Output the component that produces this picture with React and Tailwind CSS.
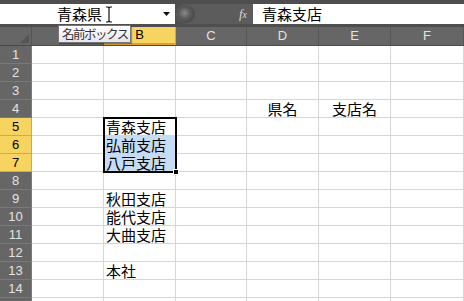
const cols = [
  { id: "A", w: 72 },
  { id: "B", w: 72 },
  { id: "C", w: 71 },
  { id: "D", w: 72 },
  { id: "E", w: 72 },
  { id: "F", w: 73 },
];

const data = {
  "4D": "県名",
  "4E": "支店名",
  "5B": "青森支店",
  "6B": "弘前支店",
  "7B": "八戸支店",
  "9B": "秋田支店",
  "10B": "能代支店",
  "11B": "大曲支店",
  "13B": "本社",
};

const selectedRows = [5, 6, 7];
const rows = Array.from({ length: 15 }, (_, i) => i + 1);

const jp = "font-['MS_UI_Gothic','Noto_Sans_CJK_JP',sans-serif]";

const App = () => {
  return (
    <div className={`relative w-[464px] h-[301px] overflow-hidden bg-white ${jp}`}>
      {/* formula bar */}
      <div className="flex h-[27px] bg-[#4e4e4e] pt-[4px] pb-[3px]">
        <div className="flex w-[175px] items-center bg-white pl-[57px] pr-[5px]">
          <span className="text-[15px] leading-[20px] text-black">青森県</span>
          <svg className="ml-[3px]" width="8" height="17" viewBox="0 0 8 17">
            <path d="M1 1h2l1 1 1-1h2M4 2v13M1 16h2l1-1 1 1h2" stroke="#111" strokeWidth="1.2" fill="none" />
          </svg>
          <svg className="ml-auto" width="7" height="4" viewBox="0 0 7 4">
            <path d="M0 0h7L3.5 4z" fill="#111" />
          </svg>
        </div>
        <div className="flex w-[78px] items-center pl-[1px]">
          <div className="flex h-[20px] flex-1 items-center justify-between rounded-l-full bg-[#5c5c5c] pl-[1px] pr-[6px]">
            <div className="h-[18px] w-[18px] rounded-full bg-[radial-gradient(circle_at_42%_45%,#8a8a8a_0%,#5a5a5a_40%,#3c3c3c_100%)]" />
            <span className="font-['Liberation_Serif',serif] italic text-[13px] leading-[18px] text-[#d8d8d8]">
              f<span className="text-[10px]">x</span>
            </span>
          </div>
        </div>
        <div className="flex-1 bg-white pl-[9px] text-[15px] leading-[20px] text-black">青森支店</div>
      </div>

      {/* column header */}
      <div className="flex h-[19px] bg-[#666] border-b border-[#4a4a4a]">
        <div className="flex w-[32px] items-end justify-end border-r border-[#555] pr-[2px] pb-[2px]">
          <svg width="9" height="9" viewBox="0 0 9 9">
            <path d="M9 0v9H0z" fill="#555" />
          </svg>
        </div>
        {cols.map((c) => (
          <div
            key={c.id}
            style={{ width: c.w }}
            className={`flex items-center justify-center border-r font-['Liberation_Sans',sans-serif] text-[13px] ${
              c.id === "B"
                ? "bg-[#f7d45f] border-[#d9a93a] text-black border-b-2 border-b-[#e0a030]"
                : "border-[#575757] text-[#e2e2e2]"
            }`}
          >
            {c.id}
          </div>
        ))}
      </div>

      {/* rows */}
      {rows.map((r) => {
        const sel = selectedRows.includes(r);
        return (
          <div key={r} className="flex h-[18px]">
            <div
              className={`w-[32px] flex items-center justify-center border-b border-r font-['Liberation_Sans',sans-serif] text-[13px] ${
                sel
                  ? "bg-[#f7d45f] text-black border-[#d9a93a]"
                  : "bg-[#666] text-[#e2e2e2] border-[#7a7a7a]"
              }`}
            >
              {r}
            </div>
            {cols.map((c) => {
              const v = data[`${r}${c.id}`];
              const blue = c.id === "B" && (r === 6 || r === 7);
              const center = c.id === "D" || c.id === "E";
              return (
                <div
                  key={c.id}
                  style={{ width: c.w }}
                  className={`flex items-end border-b border-r border-[#d6d6d6] text-[15px] leading-[17px] text-black ${
                    center ? "justify-center" : "pl-[2px]"
                  } ${blue ? "bg-[#c5dcf4]" : ""}`}
                >
                  {v}
                </div>
              );
            })}
          </div>
        );
      })}

      {/* selection */}
      <div className="absolute left-[103px] top-[117px] w-[74px] h-[56px] border-2 border-black" />
      <div className="absolute left-[173px] top-[169px] w-[6px] h-[6px] bg-black border border-white" />

      {/* tooltip */}
      <div className="absolute left-[58px] top-[25px] h-[18px] whitespace-nowrap pl-[3px] pr-[2px] border border-[#767676] bg-[linear-gradient(#ffffff,#e4e5f0)] shadow-[1px_1px_1px_rgba(0,0,0,0.3)] text-[12.5px] tracking-[-1.5px] leading-[16px] text-[#333]">
        名前ボックス
      </div>
    </div>
  );
};

export default App;
